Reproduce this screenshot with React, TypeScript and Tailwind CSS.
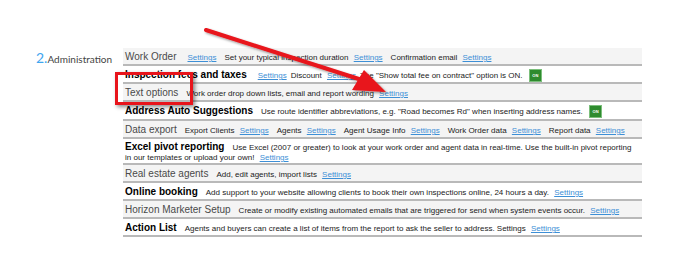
import type { ReactNode } from "react";

const Settings = () => (
  <a href="#" className="ml-[3px] text-[8px] text-[#3d8fd6] underline decoration-[#3d8fd6]">
    Settings
  </a>
);

const On = () => (
  <span className="ml-[4px] inline-flex h-[13px] w-[13px] items-center justify-center border border-[#7bbf7b] bg-[#2e8b2e] align-middle text-[4px] font-bold text-white">
    ON
  </span>
);

type RowProps = { title: string; strong?: boolean; children: ReactNode; size?: "tall" | "mid" };

function Row({ title, strong, children, size }: RowProps) {
  const height =
    size === "tall" ? "h-[26px] pt-[2px] leading-[10px]" : size === "mid" ? "h-[19px] pt-[3px] leading-[12px]" : "h-[18px] pt-[3px] leading-[12px]";
  return (
    <div className={`border-b-2 border-[#b9b9b9] px-[2px] text-[8px] ${height} ${strong ? "bg-white" : "bg-[#f4f4f4]"}`}>
      <span className={`mr-[8px] text-[10px] ${size === "tall" ? "leading-[11px]" : ""} ${strong ? "font-bold text-black" : "text-[#4a4a4a]"}`}>
        {title}
      </span>
      <span className="text-[#222]">{children}</span>
    </div>
  );
}

const Gap = () => <span className="inline-block w-[8px]" />;
const SmallGap = () => <span className="inline-block w-[4px]" />;

export default function App() {
  return (
    <div className="relative h-[274px] w-[684px] overflow-hidden bg-white" style={{ fontFamily: '"Liberation Sans", Arial, sans-serif' }}>
      <div className="flex pl-[36px] pt-[48px]">
        <div className="-mt-[3px] w-[87px] font-['Lato',sans-serif]">
          <span className="text-[14px] text-[#3fa6ef]">2.</span>
          <span className="text-[10px] text-[#444]">Administration</span>
        </div>
        <div className="w-[519px]">
          <Row title="Work Order">
            <Settings />
            <Gap />
            Set your typical inspection duration <Settings />
            <Gap />
            Confirmation email <Settings />
          </Row>
          <Row title="Inspection fees and taxes" strong>
            <Settings />
            <SmallGap />
            Discount <Settings />
            <SmallGap />
            The "Show total fee on contract" option is ON. <On />
          </Row>
          <Row title="Text options">
            Work order drop down lists, email and report wording <Settings />
          </Row>
          <Row title="Address Auto Suggestions" strong size="mid">
            Use route identifier abbreviations, e.g. "Road becomes Rd" when inserting address names. <On />
          </Row>
          <Row title="Data export">
            Export Clients <Settings />
            <Gap />
            Agents <Settings />
            <Gap />
            Agent Usage Info <Settings />
            <Gap />
            Work Order data <Settings />
            <Gap />
            Report data <Settings />
          </Row>
          <Row title="Excel pivot reporting" strong size="tall">
            Use Excel (2007 or greater) to look at your work order and agent data in real-time. Use the built-in pivot reporting
            <br />
            in our templates or upload your own! <Settings />
          </Row>
          <Row title="Real estate agents">
            Add, edit agents, import lists <Settings />
          </Row>
          <Row title="Online booking" strong>
            Add support to your website allowing clients to book their own inspections online, 24 hours a day. <Settings />
          </Row>
          <Row title="Horizon Marketer Setup">
            Create or modify existing automated emails that are triggered for send when system events occur. <Settings />
          </Row>
          <Row title="Action List" strong>
            Agents and buyers can create a list of items from the report to ask the seller to address. Settings <Settings />
          </Row>
        </div>
      </div>

      {/* annotation overlay */}
      <div className="absolute left-[115px] top-[72px] h-[33px] w-[78px] border-[3px] border-[#e8141b] shadow-[2px_2px_4px_rgba(0,0,0,0.45)]" />
      <svg className="pointer-events-none absolute left-0 top-0" width="684" height="274" viewBox="0 0 684 274">
        <defs>
          <filter id="sh" x="-10%" y="-10%" width="130%" height="130%">
            <feDropShadow dx="1.5" dy="1.5" stdDeviation="1.2" floodColor="#000" floodOpacity="0.4" />
          </filter>
        </defs>
        <g filter="url(#sh)">
          <line x1="206" y1="30" x2="362" y2="80" stroke="#e8141b" strokeWidth="4" strokeLinecap="round" />
          <polygon points="386,92 352,90 364,70" fill="#e8141b" />
        </g>
      </svg>
    </div>
  );
}
